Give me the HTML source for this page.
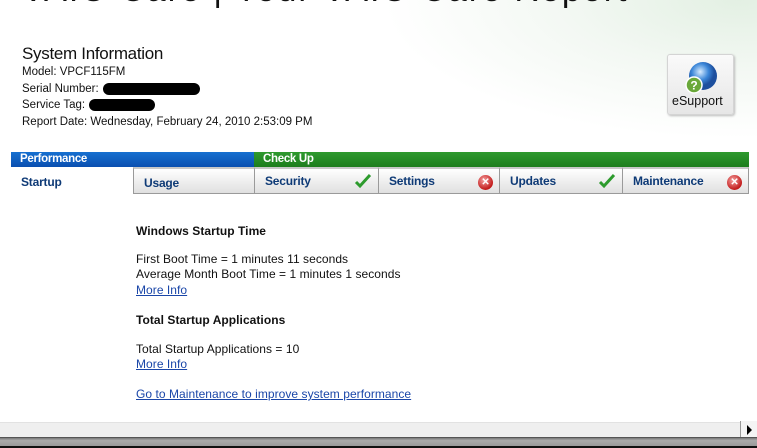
<!DOCTYPE html>
<html><head><meta charset="utf-8"><style>
*{margin:0;padding:0;box-sizing:border-box}
body{width:757px;height:448px;overflow:hidden;background:#fff;font-family:"Liberation Sans",sans-serif;position:relative;color:#000}
.bg{position:absolute;left:380px;top:0;width:400px;height:140px;background:radial-gradient(ellipse at 90% 0%,#e3f0e3 0%,#f3f8f3 35%,#fff 70%)}
.t{position:absolute;white-space:nowrap}
.title{left:22px;top:-29px;font-size:34px;letter-spacing:2px;color:#111}
.si{left:22px;top:44px;font-size:17px;letter-spacing:-0.3px;color:#111}
.info{left:22px;font-size:11.5px;letter-spacing:0px;color:#111}
.blk{position:absolute;background:#000;border-radius:7px;height:12px}
.es{position:absolute;left:667px;top:54px;width:67px;height:61px;border:1px solid #d4d4d4;border-radius:3px;background:linear-gradient(#fafafa,#e6e6e6);box-shadow:1px 1px 2px #bbb}
.row1{position:absolute;top:152px;height:15px;color:#fff;font-weight:bold;font-size:11.5px;letter-spacing:-0.3px;padding:1px 0 0 9px}
.tab{position:absolute;top:167px;height:27px;border:1px solid #9a9a9a;border-top:2px solid #c8c8c8;background:linear-gradient(#fff,#ececec 60%,#e0e0e0);font-weight:bold;font-size:12px;letter-spacing:-0.2px;color:#0e3a76;padding:5px 0 0 10px}
.ok{position:absolute;right:6px;top:4px}
.x{position:absolute;right:6px;top:6px;width:15px;height:15px;border-radius:50%;background:radial-gradient(circle at 40% 35%,#f5a0a0,#c21a1a 70%);color:#fff;font-size:10px;text-align:center;line-height:15px}
.c{left:136px;font-size:12px;letter-spacing:0.05px;color:#111}
.b{font-weight:bold}
a{color:#1a46a8;text-decoration:underline}
</style></head><body>
<div class="bg"></div>
<div class="t title">VAIO Care | Your VAIO Care Report</div>
<div class="t si">System Information</div>
<div class="t info" style="top:66px">Model: VPCF115FM</div>
<div class="t info" style="top:83px">Serial Number:</div>
<div class="blk" style="left:103px;top:83px;width:97px"></div>
<div class="t info" style="top:99px">Service Tag:</div>
<div class="blk" style="left:89px;top:99px;width:66px"></div>
<div class="t info" style="top:116px">Report Date: Wednesday, February 24, 2010 2:53:09 PM</div>
<div class="es">
<svg style="position:absolute;left:15px;top:5px" width="36" height="36" viewBox="0 0 36 36"><defs><radialGradient id="g" cx="40%" cy="35%"><stop offset="0" stop-color="#d8ecff"/><stop offset=".6" stop-color="#3b86d8"/><stop offset="1" stop-color="#1d4f9e"/></radialGradient></defs><circle cx="20" cy="16" r="14" fill="url(#g)"/><circle cx="11" cy="25" r="8" fill="#6aa83a" stroke="#fff" stroke-width="1.5"/><text x="11" y="29.5" font-size="12" font-weight="bold" fill="#fff" text-anchor="middle" font-family="Liberation Sans">?</text></svg>
<div class="t" style="left:4px;top:39px;font-size:12.5px;color:#111">eSupport</div>
</div>
<div class="row1" style="left:11px;width:243px;background:linear-gradient(#1670d0,#0a4fb0)">Performance</div>
<div class="row1" style="left:254px;width:495px;background:linear-gradient(#2f9a2f,#1d7d1d)">Check Up</div>
<div class="tab" style="left:11px;width:122px;background:#fff;border:none;padding-top:8px">Startup</div>
<div class="tab" style="left:133px;width:122px;padding-top:7px">Usage</div>
<div class="tab" style="left:254px;width:125px">Security<svg class="ok" width="18" height="16" viewBox="0 0 18 16"><path d="M2 9 L6 13 L16 2" stroke="#2d9b2d" stroke-width="3" fill="none"/></svg></div>
<div class="tab" style="left:378px;width:122px">Settings<div class="x">✕</div></div>
<div class="tab" style="left:499px;width:124px">Updates<svg class="ok" width="18" height="16" viewBox="0 0 18 16"><path d="M2 9 L6 13 L16 2" stroke="#2d9b2d" stroke-width="3" fill="none"/></svg></div>
<div class="tab" style="left:622px;width:127px">Maintenance<div class="x">✕</div></div>
<div class="t c b" style="top:224px">Windows Startup Time</div>
<div class="t c" style="top:252px">First Boot Time = 1 minutes 11 seconds</div>
<div class="t c" style="top:267px">Average Month Boot Time = 1 minutes 1 seconds</div>
<div class="t c" style="top:283px"><a>More Info</a></div>
<div class="t c b" style="top:313px">Total Startup Applications</div>
<div class="t c" style="top:342px">Total Startup Applications = 10</div>
<div class="t c" style="top:357px"><a>More Info</a></div>
<div class="t c" style="top:387px"><a>Go to Maintenance to improve system performance</a></div>
<div style="position:absolute;left:0;top:422px;width:757px;height:15px;background:#efefef;border-top:1px solid #e2e2e2"></div>
<div style="position:absolute;left:740px;top:421px;width:17px;height:17px;border-left:1px solid #999;background:#f4f4f4"></div>
<div style="position:absolute;left:747px;top:425px;width:0;height:0;border-left:5px solid #000;border-top:5px solid transparent;border-bottom:5px solid transparent"></div>
<div style="position:absolute;left:0;top:437px;width:757px;height:9px;background:linear-gradient(#777,#aaa 30%,#999);border-top:1px solid #555"></div>
<div style="position:absolute;left:0;top:446px;width:757px;height:2px;background:#111"></div>
</body></html>
